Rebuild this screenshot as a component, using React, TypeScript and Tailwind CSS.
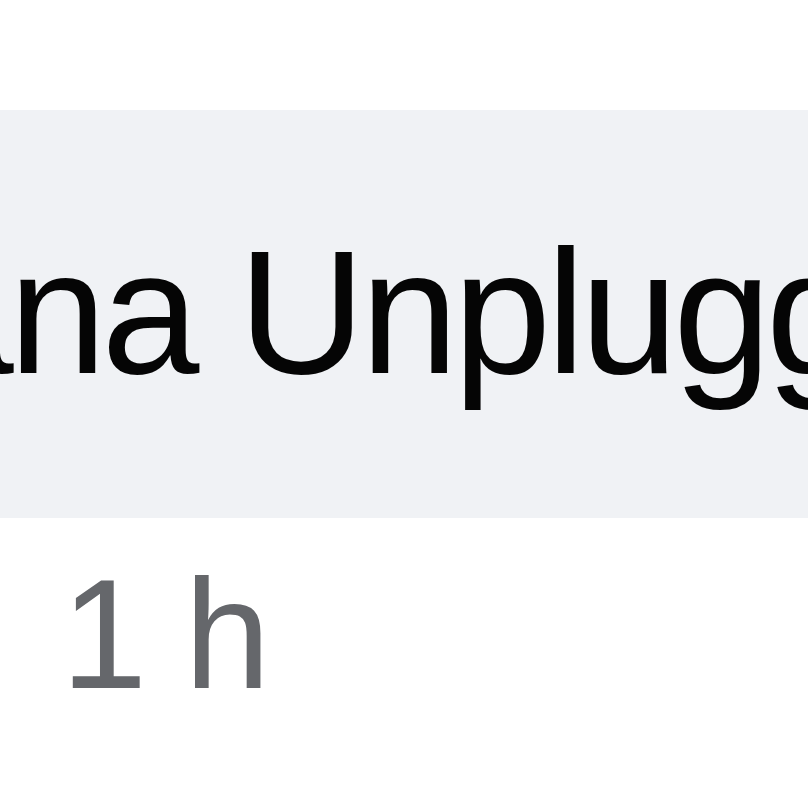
export default function App() {
  return (
    <div className="w-[808px] h-[808px] overflow-hidden bg-white" style={{ fontFamily: '"Liberation Sans", Arial, sans-serif' }}>
      {/* top white gap above the bubble */}
      <div className="h-[110px]" />

      {/* comment bubble */}
      <div className="h-[408px] bg-[#f0f2f5] pt-[114px] overflow-hidden">
        <div className="ml-[-377px] whitespace-nowrap text-[176px] leading-none tracking-[-5px] text-[#050505]">
          Nirvana Unplugged in New York
        </div>
      </div>

      {/* timestamp */}
      <div className="mt-[39px] ml-[61px] whitespace-nowrap text-[155px] leading-none tracking-[-3px] text-[#65676b]">
        1 h
      </div>
    </div>
  );
}
